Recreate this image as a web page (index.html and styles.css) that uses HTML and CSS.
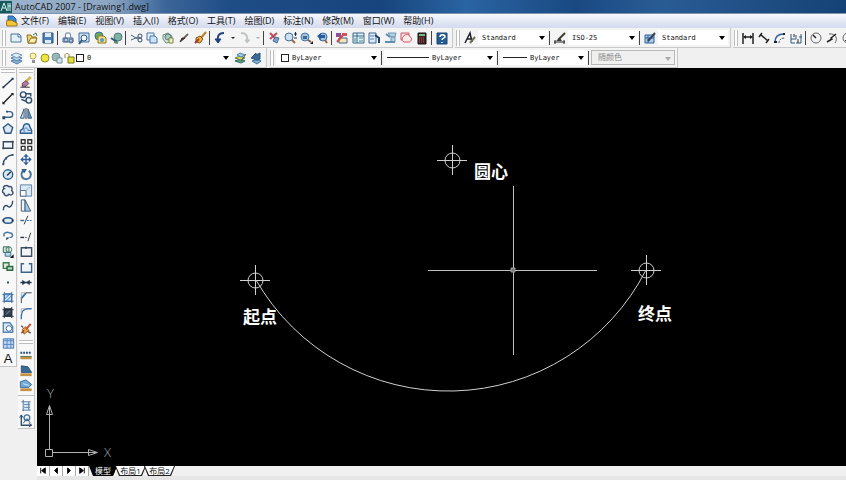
FILE: index.html
```
<!DOCTYPE html>
<html lang="zh-CN">
<head>
    <meta charset="UTF-8">
    <meta name="viewport" content="width=device-width, initial-scale=1.0">
    <title>AutoCAD 2007 - [Drawing1.dwg]</title>
    <link rel="stylesheet" href="styles.css">
</head>
<body>

<header class="titlebar">
    <svg class="app-icon" viewBox="0 0 12 12"><rect width="12" height="12" fill="#17595c"/><path d="M1 10L4 2l3 8M2 7h4M8 2v8M10 2v8M8 5h3" stroke="#d5f2ec"/></svg>
    <h1>AutoCAD 2007 - [Drawing1.dwg]</h1>
</header>

<nav class="menubar">
    <svg class="doc-icon" viewBox="0 0 12 12"><path d="M2 1h5l3 3v6H2z" fill="#3b86cf" stroke="#275d98"/><path d="M0 6l5-1 6 3v3H1z" fill="#f2c534" stroke="#9a7414"/></svg>
    <a href="#">文件(F)</a>
    <a href="#">编辑(E)</a>
    <a href="#">视图(V)</a>
    <a href="#">插入(I)</a>
    <a href="#">格式(O)</a>
    <a href="#">工具(T)</a>
    <a href="#">绘图(D)</a>
    <a href="#">标注(N)</a>
    <a href="#">修改(M)</a>
    <a href="#">窗口(W)</a>
    <a href="#">帮助(H)</a>
</nav>

<div class="toolrow">
    <!-- Standard -->
    <div class="toolbar">
        <span class="grip"></span>
        <button aria-label="新建"><svg viewBox="0 0 16 16"><path d="M3 4h8l2 2v6H3z" fill="#e4f1fb" stroke="#48779f"/><path d="M10 4v3h3" stroke="#48779f"/></svg></button>
        <button aria-label="打开"><svg viewBox="0 0 16 16"><path d="M3 5h4l1 2h4v6H4z" fill="#f1d76a" stroke="#8a7126"/><path d="M4 13l3-5h6l-2 5z" fill="#fbeeb0" stroke="#8a7126"/><path d="M9 5l3-2 1 3" stroke="#3d8246"/></svg></button>
        <button aria-label="保存"><svg viewBox="0 0 16 16"><path d="M3 3h10v10H3z" fill="#4c7fb4" stroke="#2b5484"/><path d="M5 3h6v4H5zM5 10h6v3H5z" fill="#dcebf8"/></svg></button>
        <span class="sep"></span>
        <button aria-label="打印"><svg viewBox="0 0 16 16"><path d="M5 8l1-5h4l1 5" fill="#fff" stroke="#657da5"/><path d="M3 8h10v4H3z" fill="#b9c8dd" stroke="#4e6893"/><circle cx="6" cy="10" r="2" stroke="#4e6893"/><circle cx="11" cy="11" r="2" stroke="#4e6893"/></svg></button>
        <button aria-label="打印预览"><svg viewBox="0 0 16 16"><path d="M3 3h10v9H3z" fill="#cfe3f5" stroke="#3e6d9d"/><circle cx="8" cy="8" r="3" fill="#edf7ff" stroke="#34597f"/><path d="M6 10l-3 4" stroke="#34597f" stroke-width="2"/></svg></button>
        <button aria-label="发布"><svg viewBox="0 0 16 16"><circle cx="7" cy="6" r="4" fill="#69a95d" stroke="#376a9b"/><path d="M6 6h6l2 2v5H6z" fill="#f3df7d" stroke="#8d7b28"/><circle cx="10" cy="10" r="2" fill="#5996cc"/></svg></button>
        <button aria-label="三维DWF"><svg viewBox="0 0 16 16"><circle cx="10" cy="7" r="4" fill="#7fb39c" stroke="#4e7890"/><path d="M3 8l6 4" stroke="#2c5876" stroke-width="2"/><path d="M6 12l4 1" stroke="#5f8f60" stroke-width="2"/></svg></button>
        <span class="sep"></span>
        <button aria-label="剪切"><svg viewBox="0 0 16 16"><path d="M3 5l7 4M3 10l7-3" stroke="#47637d"/><circle cx="12" cy="6" r="2" stroke="#2f4c69"/><circle cx="12" cy="10" r="2" stroke="#2f4c69"/></svg></button>
        <button aria-label="复制"><svg viewBox="0 0 16 16"><path d="M3 3h7v7H3z" fill="#e6f1fb" stroke="#4775a4"/><path d="M6 6h5l2 2v5H6z" fill="#cfe2f5" stroke="#4775a4"/></svg></button>
        <button aria-label="粘贴"><svg viewBox="0 0 16 16"><path d="M3 5l5-2 4 3-1 6-5 1-3-4z" fill="#dce9da" stroke="#6d8878"/><circle cx="8" cy="7" r="3" fill="#a5cabc" stroke="#587b86"/><path d="M9 8h4v5H9z" fill="#eef2bf" stroke="#77824a"/></svg></button>
        <button aria-label="特性匹配"><svg viewBox="0 0 16 16"><path d="M12 4L8 8" stroke="#6d6a66" stroke-width="2"/><path d="M9 8l-5 4 2-4z" fill="#3b2e2b" stroke="#3b2e2b"/></svg></button>
        <button aria-label="块编辑器"><svg viewBox="0 0 16 16"><path d="M14 2L8 9" stroke="#b6812a" stroke-width="2"/><path d="M4 8l4-2 3 3-3 4-4-1z" fill="#e8b13c" stroke="#765722"/><path d="M3 13l4-4" stroke="#a63b27" stroke-width="2"/></svg></button>
        <span class="sep"></span>
        <button aria-label="放弃"><svg viewBox="0 0 16 16"><path d="M12 3C6 3 5 7 6 12" stroke="#20407f" stroke-width="2"/><path d="M3 9l3 4 3-4z" fill="#20407f" stroke="#20407f"/></svg></button>
        <button class="more" aria-label="放弃列表"><svg viewBox="0 0 9 16"><path d="M3 7h4L5 9z" fill="#222"/></svg></button>
        <button aria-label="重做"><svg viewBox="0 0 16 16"><path d="M4 3c6 0 7 4 6 9" stroke="#bfc4c9" stroke-width="2"/><path d="M8 10l2 3 3-3z" fill="#bfc4c9" stroke="#bfc4c9"/></svg></button>
        <button class="more" aria-label="重做列表"><svg viewBox="0 0 9 16"><path d="M3 7h4L5 9z" fill="#aaa"/></svg></button>
        <span class="sep"></span>
        <button aria-label="实时平移"><svg viewBox="0 0 16 16"><path d="M4 3l7 7M11 3L4 9" stroke="#bb4c5c" stroke-width="2"/><path d="M9 7l4 1-2 5-4-2z" fill="#7e9fc8" stroke="#4b6f9b"/></svg></button>
        <button aria-label="实时缩放"><svg viewBox="0 0 16 16"><circle cx="7" cy="7" r="4" fill="#cbe2f3" stroke="#416f9c"/><path d="M10 10l3 3" stroke="#a4653c" stroke-width="2"/><path d="M12 4h3M13.5 2v4M12 8h3" stroke="#1e2f42"/></svg></button>
        <button aria-label="窗口缩放"><svg viewBox="0 0 16 16"><circle cx="7" cy="7" r="4" fill="#9fc4e4" stroke="#47789f"/><path d="M5 6h4v3H5z" fill="#3e6b9a"/><path d="M10 10l3 2" stroke="#8c5635" stroke-width="2"/><path d="M15 11v3h-3z" fill="#111"/></svg></button>
        <button aria-label="缩放上一个"><svg viewBox="0 0 16 16"><circle cx="9" cy="7" r="4" fill="#9cc3e4" stroke="#3c6c9a"/><path d="M3 6l4-3v2h4v3H7v2z" fill="#285c98"/><path d="M11 10l2 3" stroke="#a15d35" stroke-width="2"/></svg></button>
        <span class="sep"></span>
        <button aria-label="特性"><svg viewBox="0 0 16 16"><path d="M2 3h5v4H2z" fill="#8d4d9b"/><path d="M8 3h5v3H8z" fill="#d4525b"/><path d="M5 8h8v5H5z" fill="#f7e4bb" stroke="#44608a"/><path d="M3 12l6-7" stroke="#c74b4b" stroke-width="2"/></svg></button>
        <button aria-label="设计中心"><svg viewBox="0 0 16 16"><path d="M3 3h11v10H3z" fill="#e2eff7" stroke="#3b6c8b"/><path d="M7 3v10M3 6h11" stroke="#3b6c8b"/><path d="M9 8h4M9 11h4M4 9h2M4 11h2" stroke="#4a9189"/></svg></button>
        <button aria-label="工具选项板"><svg viewBox="0 0 16 16"><path d="M3 3h7v10H3z" fill="#dfeafa" stroke="#3d658f"/><path d="M4 6h4M4 9h4" stroke="#4f83bb"/><path d="M9 5l4 3v5" stroke="#243f66" stroke-width="2"/></svg></button>
        <button aria-label="图纸集管理器"><svg viewBox="0 0 16 16"><path d="M6 3h8l-1 4H9zM9 7h4v5H9z" fill="#b5d0e2" stroke="#6f9ab8"/><path d="M4 4l4 3M3 12h10" stroke="#5f8fae" stroke-width="2"/></svg></button>
        <button aria-label="标记集管理器"><svg viewBox="0 0 16 16"><path d="M3 3h8v7H3z" fill="#f7dfe0" stroke="#ca5a68"/><path d="M6 6c2-3 6-1 6 1 3 1 1 5-1 5H6c-3-1-2-5 0-6z" fill="#fbeaea" stroke="#cb5362"/></svg></button>
        <button aria-label="快速计算器"><svg viewBox="0 0 16 16"><path d="M4 3h8v11H4z" fill="#3a2224" stroke="#1b1515"/><path d="M5 5h6" stroke="#79b78a" stroke-width="2"/><path d="M5 8h6M5 10h6M5 12h6" stroke="#c5554d" stroke-dasharray="1 1"/></svg></button>
        <span class="sep"></span>
        <button aria-label="帮助"><svg viewBox="0 0 16 16"><path d="M3 3h10v11H3z" fill="#245c93" stroke="#174574"/><path d="M6 7c0-3 5-3 5 0 0 1-3 1-3 3M8 12v1" stroke="#fff" stroke-width="1.5"/></svg></button>
    </div>

    <!-- Styles -->
    <div class="toolbar">
        <span class="grip"></span>
        <button aria-label="文字样式"><svg viewBox="0 0 16 16"><path d="M3 13L8 3l2 9M5 9h5" stroke="#20242a" stroke-width="1.5"/><path d="M8 13l5-6" stroke="#726c5b" stroke-width="2"/></svg></button>
        <div class="combo"><select aria-label="文字样式控制"><option>Standard</option></select></div>
        <span class="sep"></span>
        <button aria-label="标注样式"><svg viewBox="0 0 16 16"><path d="M2 12h11M3 10v4M12 10v4" stroke="#20242a"/><path d="M6 10l7-7" stroke="#3f3b35" stroke-width="2"/><path d="M4 11l4-3 2 3z" fill="#3f3b35"/></svg></button>
        <div class="combo"><select aria-label="标注样式控制"><option>ISO-25</option></select></div>
        <span class="sep"></span>
        <button aria-label="表格样式"><svg viewBox="0 0 16 16"><path d="M3 5h9v8H3z" fill="#a9cdf0" stroke="#2f6199"/><path d="M3 8h9M6 5v8" stroke="#2f6199"/><path d="M6 11l7-8" stroke="#3a4450" stroke-width="2"/></svg></button>
        <div class="combo"><select aria-label="表格样式控制"><option>Standard</option></select></div>
    </div>

    <!-- Dimension -->
    <div class="toolbar last">
        <span class="grip"></span>
        <button aria-label="线性标注"><svg viewBox="0 0 16 16"><path d="M3 3v11M13 3v11M4 7h8" stroke="#222" stroke-width="1.5"/><path d="M3 7l3-2v4zM13 7l-3-2v4z" fill="#222"/></svg></button>
        <button aria-label="对齐标注"><svg viewBox="0 0 16 16"><path d="M5 5l7 6M3 7l3-4M10 13l3-4" stroke="#222" stroke-width="1.5"/></svg></button>
        <button aria-label="弧长标注"><svg viewBox="0 0 16 16"><path d="M3 12c0-5 3-8 9-8" stroke="#315f91" stroke-width="1.5"/><path d="M7 13c0-3 2-5 6-5" stroke="#315f91" stroke-dasharray="2 1"/><path d="M2 11h3v2H2zM11 3h2v2h-2z" fill="#222"/></svg></button>
        <button aria-label="坐标标注"><svg viewBox="0 0 16 16"><path d="M3 4v9M3 9h5V5M8 13h5V4M11 7h3M3 13h4" stroke="#31587d"/><path d="M6 4v3M10 9v4" stroke="#222"/></svg></button>
        <span class="sep"></span>
        <button aria-label="半径标注"><svg viewBox="0 0 16 16"><circle cx="8" cy="8" r="5" stroke="#666"/><path d="M8 8L5 5" stroke="#222" stroke-width="1.5"/></svg></button>
        <button aria-label="折弯标注"><svg viewBox="0 0 16 16"><path d="M5 4c7-1 9 5 6 9" stroke="#666"/><path d="M3 12l5-3-1-1 5-4" stroke="#222" stroke-width="1.5"/></svg></button>
        <button aria-label="直径标注"><svg viewBox="0 0 16 16"><circle cx="8" cy="8" r="5" stroke="#666"/><path d="M5 11l6-6" stroke="#222"/></svg></button>
    </div>
</div>

<div class="toolrow">
    <!-- Layers -->
    <div class="toolbar">
        <span class="grip"></span>
        <button aria-label="图层特性管理器"><svg viewBox="0 0 16 16"><path d="M3 11l5-2 6 2-5 3z" fill="#8ab2d4" stroke="#507fa8"/><path d="M3 8l5-2 6 2-5 3z" fill="#b9d4e8" stroke="#507fa8"/><path d="M3 5l5-2 6 2-5 3z" fill="#e2eff8" stroke="#7096b8"/></svg></button>
        <div class="combo layer">
            <svg viewBox="0 0 12 12"><circle cx="6" cy="4" r="3" fill="#fdf5ad" stroke="#b3a75a"/><path d="M5 8h3v3H5z" fill="#8a8f98"/></svg>
            <svg viewBox="0 0 12 12"><circle cx="6" cy="6" r="4" fill="#f0e53a" stroke="#93932b"/></svg>
            <svg viewBox="0 0 12 12"><circle cx="5" cy="5" r="4" fill="#9bb9b9" stroke="#6c9097"/><path d="M6 6h5v5H6z" fill="#d6e5ea" stroke="#6c9097"/></svg>
            <svg viewBox="0 0 12 12"><path d="M2 6V3c0-2 4-2 4 0v3" stroke="#8b8a28"/><path d="M5 5h6v6H5z" fill="#e6df3b" stroke="#74741e"/></svg>
            <span class="swatch"></span>
            <select aria-label="图层控制"><option>0</option></select>
        </div>
        <button aria-label="将对象的图层置为当前"><svg viewBox="0 0 16 16"><path d="M3 11l5-2 5 2-4 2z" fill="#62a06a" stroke="#31677b"/><path d="M3 8l5-2 5 2-4 2z" fill="#e5dc56" stroke="#617f57"/><path d="M5 5l3-2 5 2-4 2z" fill="#abcce5" stroke="#507fa8"/><path d="M9 11l5-7" stroke="#4c6655"/></svg></button>
        <button aria-label="上一个图层"><svg viewBox="0 0 16 16"><path d="M4 11l5-2 4 2-4 3z" fill="#7eb0d1" stroke="#3f7397"/><path d="M12 3v6c-3 2-5 1-6 0L3 8l5-5v2z" fill="#3b6a99" stroke="#2c587e"/></svg></button>
    </div>

    <!-- Properties -->
    <div class="toolbar">
        <span class="grip"></span>
        <div class="combo color"><span class="swatch"></span><select aria-label="颜色控制"><option>ByLayer</option></select></div>
        <span class="sep"></span>
        <div class="combo linetype"><span class="sample"></span><select aria-label="线型控制"><option>ByLayer</option></select></div>
        <span class="sep"></span>
        <div class="combo weight"><span class="sample"></span><select aria-label="线宽控制"><option>ByLayer</option></select></div>
        <span class="sep"></span>
        <div class="combo plot"><select aria-label="打印样式控制" disabled><option>随颜色</option></select></div>
    </div>
</div>

<main class="workspace">
    <div class="palette">
        <!-- Draw -->
        <div class="toolcol draw">
            <span class="grip-h"></span>
            <button aria-label="直线"><svg viewBox="0 0 16 16"><path d="M3 13L13 4" stroke="#26384c" stroke-width="1.5"/><path d="M2 12h2v2H2zM12 3h2v2h-2z" fill="#26384c"/></svg></button>
            <button aria-label="构造线"><svg viewBox="0 0 16 16"><path d="M3 13L13 3" stroke="#222" stroke-width="1.5"/><path d="M2 11v3h3zM14 2v3l-3-3z" fill="#222"/></svg></button>
            <button aria-label="多段线"><svg viewBox="0 0 16 16"><path d="M3 12h7c4 0 4-6 0-6H7" stroke="#3d658e" stroke-width="1.5"/><path d="M2 11h3v3H2zM6 5h2v2H6z" fill="#28496c"/></svg></button>
            <button aria-label="正多边形"><svg viewBox="0 0 16 16"><path d="M8 3l5 4-2 6H5L3 7z" fill="#dbe8f5" stroke="#32587e" stroke-width="1.5"/></svg></button>
            <button aria-label="矩形"><svg viewBox="0 0 16 16"><path d="M3 5h10v7H3z" fill="#eef4fa" stroke="#39495b" stroke-width="1.5"/><path d="M2 11h2v2H2zM12 4h2v2h-2z" fill="#39495b"/></svg></button>
            <button aria-label="圆弧"><svg viewBox="0 0 16 16"><path d="M3 13c0-5 4-9 10-10" stroke="#34506d" stroke-width="1.5"/><path d="M2 12h2v2H2zM5 6h2v2H5zM12 2h2v2h-2z" fill="#34506d"/></svg></button>
            <button aria-label="圆"><svg viewBox="0 0 16 16"><circle cx="8" cy="8" r="5" fill="#d8e9f8" stroke="#2f618f" stroke-width="1.5"/><path d="M7 9l4-4" stroke="#26384c" stroke-width="1.5"/></svg></button>
            <button aria-label="修订云线"><svg viewBox="0 0 16 16"><path d="M5 3c2-1 3 0 4 1 3-1 4 2 3 4 3 3 0 6-3 4-2 3-6 1-5-1-3-1-2-4 0-5-2-1 0-3 1-3z" fill="#e8f0f8" stroke="#3d526a" stroke-width="1.5"/></svg></button>
            <button aria-label="样条曲线"><svg viewBox="0 0 16 16"><path d="M3 13c0-5 3-6 5-4s5-1 5-6" stroke="#34506d" stroke-width="1.5"/></svg></button>
            <button aria-label="椭圆"><svg viewBox="0 0 16 16"><ellipse cx="8" cy="8" rx="5" ry="3" fill="#dcebf8" stroke="#28527d" stroke-width="1.5"/><path d="M2 7h2v2H2zM12 7h2v2h-2z" fill="#223a55"/></svg></button>
            <button aria-label="椭圆弧"><svg viewBox="0 0 16 16"><path d="M4 9C2 5 7 4 9 5c5 0 5 5 1 5" stroke="#4975a0" stroke-width="1.5"/><path d="M6 10v3l4-3z" fill="#28496c"/></svg></button>
            <button aria-label="插入块"><svg viewBox="0 0 16 16"><path d="M3 3h6v6H3z" fill="#cbe4d4" stroke="#346b59"/><circle cx="9" cy="6" r="3" stroke="#3d775c"/><path d="M5 9h6v4H5z" fill="#c4dbea" stroke="#346b89"/><path d="M14 11v4h-4z" fill="#111"/></svg></button>
            <button aria-label="创建块"><svg viewBox="0 0 16 16"><path d="M3 4h6v6H3z" fill="#e0eedc" stroke="#3c7f4a" stroke-width="1.5"/><path d="M7 8h6v4H7z" fill="#b6ddb8" stroke="#2e6543" stroke-width="1.5"/></svg></button>
            <button aria-label="点"><svg viewBox="0 0 16 16"><path d="M7 8h2v2H7z" fill="#26496e"/></svg></button>
            <button aria-label="图案填充"><svg viewBox="0 0 16 16"><path d="M4 4h8v8H4z" fill="#cfe5fa" stroke="#2d5d91"/><path d="M2 5h12M2 12h12M4 2v12M12 2v12M4 10l6-6M6 12l6-6" stroke="#3c73ab"/></svg></button>
            <button aria-label="渐变色"><svg viewBox="0 0 16 16"><path d="M4 4h8v8H4z" fill="#314252" stroke="#172635"/><path d="M2 5h12M2 12h12M4 2v12M12 2v12" stroke="#222f3c"/><path d="M6 10l4-4" stroke="#8aa0b3"/></svg></button>
            <button aria-label="面域"><svg viewBox="0 0 16 16"><path d="M3 3h7l3 4v6H3z" fill="#dcebfa" stroke="#5a86b3" stroke-width="1.5"/><circle cx="9" cy="9" r="3" fill="#fff" stroke="#3f6d9c"/></svg></button>
            <button aria-label="表格"><svg viewBox="0 0 16 16"><path d="M3 3h11v10H3z" fill="#bed7f5" stroke="#4874ab"/><path d="M3 5h11M7 3v10M11 3v10M3 9h11" stroke="#5885bd"/></svg></button>
            <button aria-label="多行文字" class="letter">A</button>
        </div>

        <div class="toolcol">
            <span class="grip-h"></span>
            <!-- Modify -->
            <div class="tools modify">
                <button aria-label="删除"><svg viewBox="0 0 16 16"><path d="M13 2L8 7" stroke="#d9b64c" stroke-width="3"/><path d="M4 9l4-3 3 3-3 3H4z" fill="#b77a9a" stroke="#60405a"/><path d="M2 13h10" stroke="#222"/></svg></button>
                <button aria-label="复制对象"><svg viewBox="0 0 16 16"><circle cx="5" cy="5" r="3" stroke="#2f4e6f" stroke-width="1.5"/><circle cx="11" cy="11" r="3" stroke="#2f4e6f" stroke-width="1.5"/><path d="M8 4h5v3M3 10l5 2" stroke="#2f4e6f" stroke-width="1.5"/></svg></button>
                <button aria-label="镜像"><svg viewBox="0 0 16 16"><path d="M6 3v10H2z" fill="#c0d8ef" stroke="#2f5986"/><path d="M10 3v10h4z" fill="#6a9bc9" stroke="#2f5986"/><path d="M8 2v12" stroke="#222"/></svg></button>
                <button aria-label="偏移"><svg viewBox="0 0 16 16"><path d="M2 13v-3l3-2c0-7 7-6 7-2l2 4v3z" fill="#c7def4" stroke="#315f91" stroke-width="1.5"/><path d="M6 12v-3l2-2 2 2v1h3" stroke="#4a78a8"/></svg></button>
                <button aria-label="阵列"><svg viewBox="0 0 16 16"><path d="M3 3h4v4H3zM10 3h4v4h-4zM3 10h4v4H3zM10 10h4v4h-4z" fill="#fff" stroke="#333" stroke-width="1.5"/></svg></button>
                <button aria-label="移动"><svg viewBox="0 0 16 16"><path d="M8 3v10M3 8h10" stroke="#315f9b" stroke-width="1.5"/><path d="M8 2l3 3H5zM8 14l3-3H5zM2 8l3-3v6zM14 8l-3-3v6z" fill="#315f9b"/></svg></button>
                <button aria-label="旋转"><svg viewBox="0 0 16 16"><path d="M11 4c4 3 2 9-3 9S2 7 5 4" stroke="#47759f" stroke-width="2"/><path d="M3 2h6L6 7z" fill="#335f8a"/></svg></button>
                <button aria-label="缩放"><svg viewBox="0 0 16 16"><path d="M2 2h12v12H2z" fill="#dbe9f6" stroke="#587da2"/><path d="M2 8h6v6H2z" fill="#fff" stroke="#476b90"/><path d="M8 8l4-4" stroke="#9ab"/></svg></button>
                <button aria-label="拉伸"><svg viewBox="0 0 16 16"><path d="M3 2h4v12H3z" fill="#eef4fa" stroke="#3f5b78"/><path d="M7 2l6 12H7z" fill="#a9c8e6" stroke="#3f5b78"/></svg></button>
                <button aria-label="修剪"><svg viewBox="0 0 16 16"><path d="M2 8h4" stroke="#356ba0" stroke-width="1.5"/><path d="M9 8h6" stroke="#356ba0" stroke-dasharray="2 1"/><path d="M6 12l4-9" stroke="#333"/></svg></button>
                <button aria-label="延伸"><svg viewBox="0 0 16 16"><path d="M2 9h4" stroke="#333" stroke-width="1.5"/><path d="M7 9h3" stroke="#356ba0" stroke-dasharray="2 1"/><path d="M10 13l3-9" stroke="#333"/></svg></button>
                <button aria-label="打断于点"><svg viewBox="0 0 16 16"><path d="M3 4h11v9H3z" fill="#f1f5f9" stroke="#3f4d5d" stroke-width="1.5"/><path d="M7 3h2v2H7z" fill="#28496c"/></svg></button>
                <button aria-label="打断"><svg viewBox="0 0 16 16"><path d="M6 4H3v9h11V4h-3" fill="#f1f5f9" stroke="#3c638b" stroke-width="1.5"/></svg></button>
                <button aria-label="合并"><svg viewBox="0 0 16 16"><path d="M2 8h12" stroke="#24384e" stroke-width="1.5"/><path d="M4 5l4 3-4 3zM12 5L8 8l4 3z" fill="#24384e"/></svg></button>
                <button aria-label="倒角"><svg viewBox="0 0 16 16"><path d="M3 14V9l5-6h6" stroke="#35404d"/><path d="M3 9l5-6" stroke="#3a74b1" stroke-width="2"/><path d="M3 8V3h5" stroke="#aaa"/></svg></button>
                <button aria-label="圆角"><svg viewBox="0 0 16 16"><path d="M3 14v-3c0-5 3-8 7-8h4" stroke="#3a74b1" stroke-width="1.5"/><path d="M3 8V3h5" stroke="#aaa"/></svg></button>
                <button aria-label="分解"><svg viewBox="0 0 16 16"><path d="M4 9l4-3 3 4-5 4z" fill="#f0a33e" stroke="#9a562b"/><path d="M8 9l5-6" stroke="#c65430" stroke-width="2"/><path d="M3 5l2 2M3 13l3-3M10 11l3 2" stroke="#71513a" stroke-width="1.5"/></svg></button>
            </div>
            <span class="grip-h second"></span>
            <!-- Inquiry -->
            <div class="tools inquiry">
                <button aria-label="距离"><svg viewBox="0 0 16 16"><path d="M2 5h12" stroke="#285078" stroke-width="2" stroke-dasharray="2 1"/><path d="M2 9h12v3H2z" fill="#c29141"/><path d="M2 9h12" stroke="#4b765a"/></svg></button>
                <button aria-label="面积"><svg viewBox="0 0 16 16"><path d="M3 3l7 1 4 6H3z" fill="#3b6a98" stroke="#28527b"/><path d="M2 11h12v3H2z" fill="#c29141"/></svg></button>
                <button aria-label="质量特性"><svg viewBox="0 0 16 16"><path d="M2 4l6-2 6 5-3 3H2z" fill="#75a9d8" stroke="#346796"/><path d="M5 6l6 2" stroke="#d8eafa"/><path d="M2 11h12v3H2z" fill="#c29141"/></svg></button>
                <span class="rule"></span>
                <button aria-label="列表"><svg viewBox="0 0 16 16"><path d="M6 4h7v9H6z" fill="#dce8f4"/><path d="M3 4h10M6 7h6M6 10h6M4 13h9" stroke="#6284aa"/><path d="M5 2v12M11 4v9" stroke="#48709b"/></svg></button>
                <button aria-label="定位点"><svg viewBox="0 0 16 16"><path d="M3 2v11h11" stroke="#31506f" stroke-width="1.5"/><path d="M1 5l2-3 2 3M11 11l3 2-3 2" stroke="#31506f"/><circle cx="9" cy="5" r="3" stroke="#47739e" stroke-width="1.5"/><path d="M5 11l4-5 4 5" stroke="#31506f"/></svg></button>
            </div>
        </div>
    </div>

    <section class="drawing">
        <svg class="canvas" role="img" aria-label="起点、圆心、终点画圆弧">
            <path class="arc" d="M219 212A222 222 0 0 0 609 202"/>

            <!-- point markers -->
            <g class="point"><circle cx="415.5" cy="92.5" r="7.5"/><path d="M400 92.5h30M415.5 77v30"/></g>
            <g class="point"><circle cx="218.5" cy="212.5" r="7.5"/><path d="M203 212.5h30M218.5 197v30"/></g>
            <g class="point"><circle cx="609.5" cy="202.5" r="7.5"/><path d="M594 202.5h30M609.5 187v30"/></g>

            <!-- cursor -->
            <path class="cursor" d="M391 202.5h169M476.5 118v169"/>
            <path class="pickbox" d="M474 200h4v4h-4z"/>

            <text class="label" x="437" y="110">圆心</text>
            <text class="label" x="206" y="255">起点</text>
            <text class="label" x="601" y="252">终点</text>

            <!-- UCS icon -->
            <path class="ucs" d="M8.5 381.5h7v7h-7zM12.5 381V338M15 384.5h44M12.5 337.5l-3 9h6zM60.5 384.5l-9-3v6z"/>
            <text class="axis" x="67" y="389">X</text>
            <text class="axis" x="10" y="330">Y</text>
        </svg>

        <div class="tabs">
            <button class="nav" aria-label="第一个"><svg viewBox="0 0 13 10"><path d="M4 2v6M9 2v6L5 5z" fill="#000" stroke="#000"/></svg></button>
            <button class="nav" aria-label="上一个"><svg viewBox="0 0 13 10"><path d="M8 2v6L5 5z" fill="#000" stroke="#000"/></svg></button>
            <button class="nav" aria-label="下一个"><svg viewBox="0 0 13 10"><path d="M5 2v6l3-3z" fill="#000" stroke="#000"/></svg></button>
            <button class="nav" aria-label="最后一个"><svg viewBox="0 0 13 10"><path d="M9 2v6M4 2v6l4-3z" fill="#000" stroke="#000"/></svg></button>
            <button class="tab active"><span>模型</span></button>
            <button class="tab"><span>布局1</span></button>
            <button class="tab"><span>布局2</span></button>
        </div>
    </section>
</main>

</body>
</html>
```
FILE: styles.css
```
* {
    box-sizing: border-box;
}

body {
    margin: 0;
    min-height: 100vh;
    display: flex;
    flex-direction: column;
    overflow: hidden;
    background-color: #f0f0f0;
    font-family: "Open Sans", "Noto Sans CJK SC", sans-serif;
    font-size: 8px;
    color: #111;
}

svg {
    display: block;
    fill: none;
}

button {
    flex: none;
    width: 16px;
    height: 16px;
    padding: 0;
    border: 0;
    background: none;
    font-family: inherit;
    color: inherit;
}

/* title and menu */
.titlebar {
    flex: none;
    display: flex;
    align-items: center;
    gap: 3px;
    height: 14px;
    background: linear-gradient(to right, #9db4cc 0, #8ba6c3 110px, #3c6699 165px, #1e4c85 230px, #17447c 45%, #2a64a2 55%, #1a4982 68%, #2a5c94 78%, #154276 100%);
    border-bottom: 1px solid #7d93ad;
}

.titlebar h1 {
    margin: 0;
    font-size: 9px;
    line-height: 12px;
    font-weight: normal;
    white-space: nowrap;
}

.app-icon {
    width: 12px;
    height: 12px;
}

.menubar {
    flex: none;
    display: flex;
    align-items: center;
    gap: 9px;
    height: 14px;
    padding-left: 6px;
    background: linear-gradient(#f8f9fd, #e3e8f5 50%, #d4dbed);
}

.menubar a {
    color: #111;
    font-size: 9px;
    line-height: 12px;
    text-decoration: none;
    white-space: nowrap;
}

.doc-icon {
    width: 12px;
    height: 12px;
    margin-right: -6px;
}

/* horizontal toolbars */
.toolrow {
    flex: none;
    display: flex;
    height: 20px;
    overflow: hidden;
    background-color: #f0f0f0;
}

.toolbar {
    flex: none;
    display: flex;
    align-items: center;
    padding-right: 2px;
    margin-right: 2px;
    border: solid #c9c9c9;
    border-width: 0 1px 1px 0;
    background-color: #f4f4f4;
}

.toolbar.last {
    border-right: 0;
}

.grip {
    width: 4px;
    height: 16px;
    margin: 0 2px;
    border: solid #bdbdbd;
    border-width: 0 1px;
    background-color: #fff;
}

.toolbar + .toolbar .grip {
    margin-left: 1px;
}

.sep {
    width: 1px;
    height: 14px;
    margin: 0 2px 0 1px;
    background-color: #444;
}

.toolbar .more {
    width: 9px;
}

.combo {
    position: relative;
    display: flex;
    align-items: center;
    width: 70px;
    height: 15px;
    padding-left: 4px;
    background-color: #fff;
}

.combo::after {
    content: "";
    position: absolute;
    right: 3px;
    top: 6px;
    border: solid transparent;
    border-width: 4px 3px 0;
    border-top-color: #000;
    pointer-events: none;
}

.combo select {
    flex: 1;
    min-width: 0;
    height: 15px;
    padding: 0;
    border: 0;
    background: none;
    appearance: none;
    color: #111;
    font-family: "DejaVu Sans Mono", "Noto Sans CJK SC", monospace;
    font-size: 7px;
}

.combo svg {
    width: 12px;
    height: 12px;
}

.combo.layer {
    width: 208px;
    padding-left: 3px;
}

.swatch {
    width: 8px;
    height: 8px;
    margin: 0 3px 0 1px;
    border: 1px solid #222;
}

.combo.color {
    width: 104px;
}

.combo.linetype {
    width: 112px;
    padding-left: 3px;
}

.combo.weight {
    width: 87px;
    padding-left: 3px;
}

.sample {
    width: 42px;
    height: 1px;
    margin-right: 3px;
    background-color: #222;
}

.weight .sample {
    width: 24px;
}

.combo.plot {
    width: 84px;
    padding-left: 6px;
    border: 1px solid #b8b8b8;
    background-color: #f0f0f0;
}

.combo.plot::after {
    border-top-color: #aaa;
}

.combo.plot select {
    font-size: 8px;
    color: #888;
    opacity: 1;
}

/* side toolbars */
.workspace {
    flex: 1;
    display: flex;
    min-height: 0;
}

.palette {
    flex: none;
    display: flex;
    align-items: flex-start;
    gap: 1px;
    width: 37px;
}

.toolcol {
    width: 17px;
    border: solid #c4c4c4;
    border-width: 0 1px 1px 0;
    background-color: #f8f8f8;
}

.toolcol button,
.toolcol button svg {
    width: 16px;
    height: 15px;
}

.draw,
.tools {
    display: flex;
    flex-direction: column;
    justify-content: space-between;
}

.draw {
    height: 299px;
}

.modify {
    height: 261px;
}

.grip-h {
    display: block;
    flex: none;
    width: 14px;
    height: 4px;
    margin: 1px 1px 2px;
    border: solid #bdbdbd;
    border-width: 1px 0;
    background-color: #fff;
}

.grip-h.second {
    margin: 4px 1px;
}

.rule {
    height: 1px;
    margin: 2px 0;
    background-color: #bbb;
}

.toolcol .letter {
    font-family: "Liberation Sans", sans-serif;
    font-size: 13px;
    line-height: 15px;
    text-align: center;
}

/* drawing area */
.drawing {
    flex: 1;
    display: flex;
    flex-direction: column;
    min-width: 0;
}

.canvas {
    flex: 1;
    width: 100%;
    min-height: 0;
    background-color: #000;
}

.arc,
.point {
    stroke: #d0d0d0;
}

.cursor {
    stroke: #c0c0c0;
}

.pickbox {
    fill: #777;
    stroke: #a0a0a0;
}

.ucs {
    stroke: #b0b0b0;
}

.label {
    fill: #fff;
    font-family: "Noto Sans CJK SC", sans-serif;
    font-size: 17px;
    font-weight: bold;
}

.axis {
    fill: #b0b0b0;
    font-family: "Open Sans", sans-serif;
    font-size: 13px;
    font-weight: 300;
}

.tabs {
    flex: none;
    display: flex;
    height: 14px;
    border-bottom: 4px solid #e6e6e6;
    background-color: #f0f0f0;
}

.tabs .nav {
    width: 13px;
    height: 10px;
    border-right: 1px solid #aaa;
    background-color: #fff;
}

.tab {
    width: 31px;
    height: 10px;
    margin-right: -2px;
    padding: 0 1px 1px;
    background-color: #222;
    clip-path: polygon(0 0, 100% 0, 27px 100%, 4px 100%);
    font-size: 8px;
    line-height: 9px;
    white-space: nowrap;
}

.tab span {
    display: block;
    height: 9px;
    background-color: #fff;
    clip-path: polygon(0 0, 100% 0, 25px 100%, 4px 100%);
}

.tab.active {
    width: 28px;
    background-color: #000;
    color: #fff;
    clip-path: polygon(0 0, 100% 0, 24px 100%, 4px 100%);
}

.tab.active span {
    background-color: #000;
}
```
